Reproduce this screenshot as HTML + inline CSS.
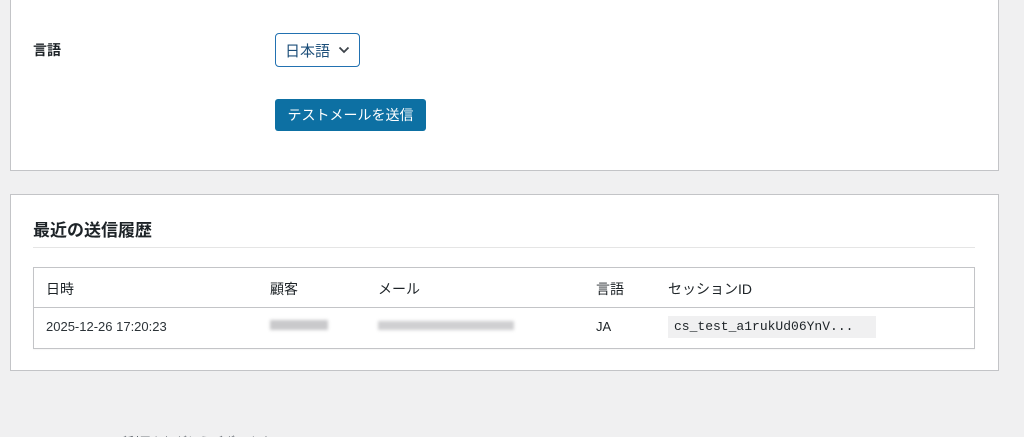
<!DOCTYPE html>
<html><head><meta charset="utf-8"><style>
*{box-sizing:border-box;margin:0;padding:0}
html,body{width:1024px;height:437px;overflow:hidden}
body{background:#f0f0f1;font-family:"Liberation Sans","Noto Sans CJK JP",sans-serif;color:#1d2327;font-size:14px;position:relative}
.card{position:absolute;background:#fff;border:1px solid #c3c4c7;left:10px;width:989px}
.abs{position:absolute}
</style></head><body>
<div class="card" style="top:-2px;height:173px"></div>
<div class="abs" style="left:33px;top:40px;font-weight:bold;font-size:14px">言語</div>
<div class="abs" style="left:275px;top:33px;width:85px;height:34px;border:1px solid #2271b1;border-radius:4px;color:#1d4f7a;font-size:15px;padding:6px 0 0 9px">日本語
<svg style="position:absolute;left:62px;top:12px" width="12" height="8" viewBox="0 0 12 8"><path d="M1.5 1.5 L6 6 L10.5 1.5" stroke="#3c434a" stroke-width="1.8" fill="none"/></svg></div>
<div class="abs" style="left:275px;top:99px;width:151px;height:32px;background:#0d70a3;border-radius:3px;color:#fff;font-size:14px;line-height:32px;text-align:center">テストメールを送信</div>

<div class="card" style="top:194px;height:177px"></div>
<div class="abs" style="left:33px;top:216px;font-weight:bold;font-size:17px">最近の送信履歴</div>
<div class="abs" style="left:33px;top:247px;width:942px;height:1px;background:#e5e5e5"></div>
<div class="abs" style="left:33px;top:267px;width:942px;height:82px;border:1px solid #c3c4c7;box-shadow:0 1px 1px rgba(0,0,0,.04)"></div>
<div class="abs" style="left:34px;top:307px;width:940px;height:1px;background:#c3c4c7"></div>
<div class="abs" style="left:46px;top:279px">日時</div>
<div class="abs" style="left:270px;top:279px">顧客</div>
<div class="abs" style="left:378px;top:279px">メール</div>
<div class="abs" style="left:596px;top:279px">言語</div>
<div class="abs" style="left:668px;top:279px">セッションID</div>
<div class="abs" style="left:46px;top:319px;font-size:13px;color:#2c3338">2025-12-26 17:20:23</div>
<div class="abs" style="left:270px;top:320px;width:58px;height:10px;background:#c9c9cb;filter:blur(1.5px)"></div>
<div class="abs" style="left:378px;top:321px;width:136px;height:9px;background:#cfcfd1;filter:blur(1.5px)"></div>
<div class="abs" style="left:596px;top:319px;font-size:13px">JA</div>
<div class="abs" style="left:668px;top:316px;width:208px;height:22px;background:#f0f0f1;font-family:'Liberation Mono',monospace;font-size:13px;line-height:22px;padding-left:6px">cs_test_a1rukUd06YnV...</div>
<div class="abs" style="left:115px;top:433px;font-size:12px;color:#50575e">ご利用ありがとうございます。</div>
</body></html>
